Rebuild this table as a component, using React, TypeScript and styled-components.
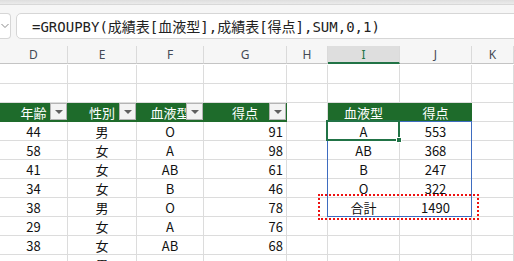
import styled, { createGlobalStyle } from "styled-components";

// Excel-like sheet: formula bar, column headers, a filtered table and a GROUPBY result

const GlobalStyle = createGlobalStyle`
  html, body {
    margin: 0;
    padding: 0;
    background: #ffffff;
  }
  body {
    font-family: "Noto Sans CJK JP", "Noto Sans", sans-serif;
  }
`;

const COLS = [68, 69, 67, 83, 41, 72, 72, 42];
const LETTERS = ["D", "E", "F", "G", "H", "I", "J", "K"];
const GREEN = "#1e6b2b";

const Page = styled.div`
  width: 514px;
  height: 261px;
  overflow: hidden;
  background: #f6f6f6;
`;

const TopBand = styled.div`
  height: 4px;
  background: linear-gradient(#dedede, #ebebeb);
  border-bottom: 1px solid #d8d8d8;
`;

const FormulaRow = styled.div`
  display: flex;
  gap: 5px;
  padding: 8px 0 7px 0;
  height: 26px;
`;

const NameBox = styled.div`
  width: 11px;
  flex: none;
  background: #ffffff;
  border: 1px solid #d6d6d6;
  border-left: none;
  border-radius: 0 4px 4px 0;
  display: flex;
  align-items: center;
  justify-content: flex-start;
  padding-left: 1px;
  box-sizing: border-box;
`;

const FormulaBox = styled.div`
  flex: 1;
  margin-right: -6px;
  background: #ffffff;
  border: 1px solid #d6d6d6;
  border-radius: 5px;
  box-sizing: border-box;
  display: flex;
  align-items: center;
  padding-left: 15px;
  font-family: "DejaVu Sans Mono", "Noto Sans CJK JP", monospace;
  font-size: 14px;
  color: #222222;
  white-space: nowrap;
`;

const Sheet = styled.div`
  position: relative;
  display: grid;
  grid-template-columns: ${COLS.map((w) => `${w}px`).join(" ")};
  grid-auto-rows: 19px;
  background: #ffffff;
`;

const ColHead = styled.div<{ $active?: boolean }>`
  height: 18px;
  box-sizing: border-box;
  background: ${(p) => (p.$active ? "#dedede" : "#f6f6f6")};
  border-right: 1px solid #dadada;
  border-bottom: ${(p) => (p.$active ? `2px solid #217346` : "1px solid #c4c4c4")};
  display: flex;
  align-items: center;
  justify-content: center;
  font-family: "Noto Sans", sans-serif;
  font-size: 12px;
  color: ${(p) => (p.$active ? "#217346" : "#444a55")};
`;

const Cell = styled.div<{ $align?: "center" | "right"; $head?: boolean }>`
  position: relative;
  box-sizing: border-box;
  height: 19px;
  border-right: 1px solid ${(p) => (p.$head ? GREEN : "#dcdcdc")};
  border-bottom: 1px solid ${(p) => (p.$head ? GREEN : "#dcdcdc")};
  background: ${(p) => (p.$head ? GREEN : "#ffffff")};
  color: ${(p) => (p.$head ? "#ffffff" : "#111111")};
  display: flex;
  align-items: center;
  justify-content: ${(p) => (p.$align === "right" ? "flex-end" : "center")};
  padding-right: ${(p) => (p.$align === "right" ? "3px" : "0")};
  font-size: 13px;
  white-space: nowrap;
  overflow: visible;
`;

const FilterButton = styled.div`
  position: absolute;
  right: 0;
  top: 0;
  width: 17px;
  height: 17px;
  box-sizing: border-box;
  background: #f3f3f3;
  border: 1px solid #b4b4b4;
  display: flex;
  align-items: center;
  justify-content: center;
`;

const Arrow = styled.div`
  width: 0;
  height: 0;
  border-left: 4px solid transparent;
  border-right: 4px solid transparent;
  border-top: 4px solid #606060;
`;

const SelectedCell = styled.div`
  position: absolute;
  left: 326px;
  top: 74px;
  width: 74px;
  height: 21px;
  box-sizing: border-box;
  border: 2px solid #217346;
  pointer-events: none;
`;

const FillHandle = styled.div`
  position: absolute;
  right: -4px;
  bottom: -4px;
  width: 6px;
  height: 6px;
  background: #217346;
  border: 1px solid #ffffff;
  box-sizing: border-box;
`;

const SpillBorder = styled.div`
  position: absolute;
  left: 327px;
  top: 75px;
  width: 145px;
  height: 96px;
  box-sizing: border-box;
  border: 1px solid #3e6cc0;
  pointer-events: none;
`;

const Annotation = styled.div`
  position: absolute;
  left: 318px;
  top: 148px;
  width: 161px;
  height: 26px;
  box-sizing: border-box;
  border: 2px dotted #ee1111;
  pointer-events: none;
`;

const tableHead = ["年齢", "性別", "血液型", "得点"];
const records = [
  ["44", "男", "O", "91"],
  ["58", "女", "A", "98"],
  ["41", "女", "AB", "61"],
  ["34", "女", "B", "46"],
  ["38", "男", "O", "78"],
  ["29", "女", "A", "76"],
  ["38", "女", "AB", "68"],
  ["", "男", "", ""],
];
const groups = [
  ["A", "553"],
  ["AB", "368"],
  ["B", "247"],
  ["O", "322"],
  ["合計", "1490"],
];

const Chevron = () => (
  <svg width="8" height="6" viewBox="0 0 8 6">
    <path d="M0.5 1 L4 4.5 L7.5 1" fill="none" stroke="#8a8a8a" strokeWidth="1" />
  </svg>
);

const App = () => {
  const rows: JSX.Element[] = [];

  // two empty rows above the table
  for (let r = 0; r < 2; r++) {
    COLS.forEach((_, c) => rows.push(<Cell key={`e${r}-${c}`} />));
  }

  // header row of both tables
  tableHead.forEach((h, c) => (
    rows.push(
      <Cell key={`h${c}`} $head>
        {h}
        <FilterButton>
          <Arrow />
        </FilterButton>
      </Cell>
    )
  ));
  rows.push(<Cell key="hH" />);
  rows.push(<Cell key="hI" $head>血液型</Cell>);
  rows.push(<Cell key="hJ" $head>得点</Cell>);
  rows.push(<Cell key="hK" />);

  // data rows
  records.forEach((rec, r) => {
    const g = groups[r];
    rows.push(<Cell key={`d${r}-0`}>{rec[0]}</Cell>);
    rows.push(<Cell key={`d${r}-1`}>{rec[1]}</Cell>);
    rows.push(<Cell key={`d${r}-2`}>{rec[2]}</Cell>);
    rows.push(<Cell key={`d${r}-3`} $align="right">{rec[3]}</Cell>);
    rows.push(<Cell key={`d${r}-4`} />);
    rows.push(<Cell key={`d${r}-5`}>{g ? g[0] : ""}</Cell>);
    rows.push(<Cell key={`d${r}-6`}>{g ? g[1] : ""}</Cell>);
    rows.push(<Cell key={`d${r}-7`} />);
  });

  return (
    <Page>
      <GlobalStyle />
      <TopBand />
      <FormulaRow>
        <NameBox>
          <Chevron />
        </NameBox>
        <FormulaBox>=GROUPBY(成績表[血液型],成績表[得点],SUM,0,1)</FormulaBox>
      </FormulaRow>
      <Sheet>
        {LETTERS.map((l) => (
          <ColHead key={l} $active={l === "I"}>
            {l}
          </ColHead>
        ))}
        {rows}
        <SpillBorder />
        <SelectedCell>
          <FillHandle />
        </SelectedCell>
        <Annotation />
      </Sheet>
    </Page>
  );
};

export default App;
